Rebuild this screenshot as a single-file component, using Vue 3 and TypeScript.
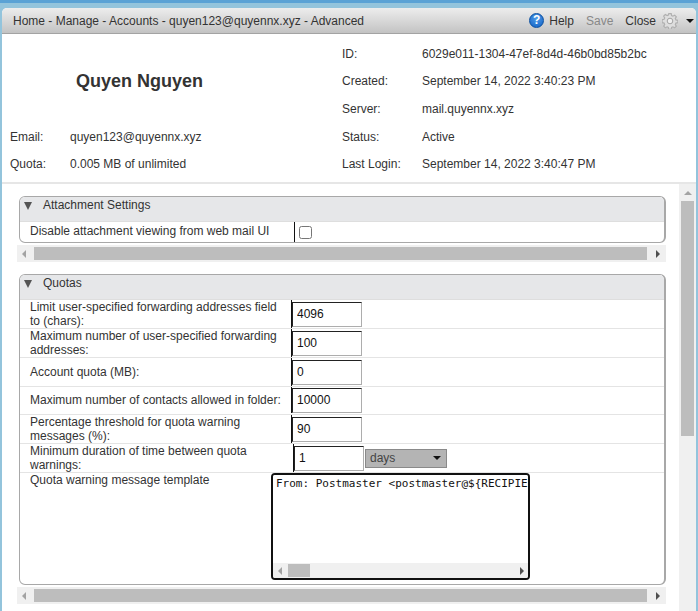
<template>
  <div class="page">
    <div class="window">
      <div class="toolbar">
        <span class="crumbs">Home - Manage - Accounts - quyen123@quyennx.xyz - Advanced</span>
        <div class="actions">
          <span class="help-icon">?</span>
          <span class="action help">Help</span>
          <span class="action save">Save</span>
          <span class="action close">Close</span>
          <svg class="gear" width="16" height="16" viewBox="0 0 16 16">
            <path
              d="M6.8.6h2.4l.4 2 1.3.6 1.8-1 1.6 1.6-1 1.8.6 1.3 2 .4v2.4l-2 .4-.6 1.3 1 1.8-1.6 1.6-1.8-1-1.3.6-.4 2H6.8l-.4-2-1.3-.6-1.8 1-1.6-1.6 1-1.8-.6-1.3-2-.4V6.700l2-.4.6-1.300-1-1.800 1.600-1.600 1.800 1 1.300-.6z"
              fill="#dedede"
              stroke="#b0b0b0"
              stroke-width="1.2"
            />
            <circle cx="8" cy="8" r="2.8" fill="#efefef" stroke="#a4a4a4" />
          </svg>
          <svg class="caret" width="8" height="4" viewBox="0 0 8 4">
            <path d="M0 0h8L4 4z" fill="#111" />
          </svg>
        </div>
      </div>

      <div class="summary">
        <div class="summary-left">
          <div class="name">Quyen Nguyen</div>
          <div v-for="row in leftInfo" :key="row.label" class="info-row left-row">
            <span class="info-label">{{ row.label }}</span>
            <span>{{ row.value }}</span>
          </div>
        </div>
        <div class="summary-right">
          <div v-for="row in rightInfo" :key="row.label" class="info-row right-row">
            <span class="info-label">{{ row.label }}</span>
            <span>{{ row.value }}</span>
          </div>
        </div>
      </div>

      <div class="scroller">
        <div class="content">
          <section class="panel">
            <div class="panel-head"><span class="twisty"></span>Attachment Settings</div>
            <div class="row check-row">
              <div class="label check-label">Disable attachment viewing from web mail UI</div>
              <div class="field"><input type="checkbox" class="check" /></div>
            </div>
          </section>
          <div class="hbar">
            <span class="arrow-left"></span>
            <span class="hthumb"></span>
            <span class="arrow-right"></span>
          </div>

          <section class="panel quotas">
            <div class="panel-head"><span class="twisty"></span>Quotas</div>
            <div
              v-for="row in quotaRows"
              :key="row.label"
              class="row"
              :style="{ height: row.height + 'px', paddingBottom: row.height === 28 ? '1px' : '0' }"
            >
              <div class="label" :style="{ width: row.labelWidth + 'px' }">{{ row.label }}</div>
              <div class="field">
                <input class="num" :value="row.value" />
                <div v-if="row.unit" class="select">{{ row.unit }}<span class="select-caret"></span></div>
              </div>
            </div>
            <div class="row template-row">
              <div class="template-label">Quota warning message template</div>
              <div class="template-box">
                <textarea class="template-text" wrap="off" readonly>From: Postmaster &lt;postmaster@${RECIPIENT_DOMAIN}&gt;</textarea>
                <div class="inner-bar">
                  <span class="arrow-left small"></span>
                  <span class="inner-thumb"></span>
                  <span class="arrow-right small"></span>
                </div>
              </div>
            </div>
          </section>
          <div class="hbar">
            <span class="arrow-left"></span>
            <span class="hthumb"></span>
            <span class="arrow-right"></span>
          </div>
        </div>

        <div class="vbar">
          <span class="arrow-up"></span>
          <span class="vthumb"></span>
        </div>
      </div>
    </div>
  </div>
</template>

<script setup lang="ts">
const leftInfo = [
  { label: 'Email:', value: 'quyen123@quyennx.xyz' },
  { label: 'Quota:', value: '0.005 MB of unlimited' },
];

const rightInfo = [
  { label: 'ID:', value: '6029e011-1304-47ef-8d4d-46b0bd85b2bc' },
  { label: 'Created:', value: 'September 14, 2022 3:40:23 PM' },
  { label: 'Server:', value: 'mail.quyennx.xyz' },
  { label: 'Status:', value: 'Active' },
  { label: 'Last Login:', value: 'September 14, 2022 3:40:47 PM' },
];

const quotaRows = [
  { label: 'Limit user-specified forwarding addresses field to (chars):', value: '4096', labelWidth: 271, height: 29 },
  { label: 'Maximum number of user-specified forwarding addresses:', value: '100', labelWidth: 271, height: 29 },
  { label: 'Account quota (MB):', value: '0', labelWidth: 271, height: 29 },
  { label: 'Maximum number of contacts allowed in folder:', value: '10000', labelWidth: 271, height: 28 },
  { label: 'Percentage threshold for quota warning messages (%):', value: '90', labelWidth: 271, height: 29 },
  { label: 'Minimum duration of time between quota warnings:', value: '1', labelWidth: 273, height: 29, unit: 'days' },
];
</script>

<style>
html,
body {
  margin: 0;
  overflow: hidden;
}
</style>

<style scoped>
.page {
  width: 698px;
  height: 611px;
  box-sizing: border-box;
  padding: 8px 2px 0;
  background: linear-gradient(#5aa2d5 0, #5aa2d5 3px, #93c4dc 3px);
  font-family: 'Liberation Sans', Arial, sans-serif;
  font-size: 12px;
  color: #333;
  overflow: hidden;
}

.window {
  height: 603px;
  display: flex;
  flex-direction: column;
  background: #fff;
  border-radius: 5px 5px 0 0;
  overflow: hidden;
}

.toolbar {
  height: 26px;
  flex: none;
  box-sizing: border-box;
  display: flex;
  align-items: center;
  justify-content: space-between;
  padding: 0 2px 0 11px;
  background: linear-gradient(#ededed, #c3c3c3);
  border-bottom: 1px solid #a3a3a3;
  color: #333;
}

.actions {
  display: flex;
  align-items: center;
}

.help-icon {
  width: 13px;
  height: 13px;
  border-radius: 50%;
  border: 1px solid #0a4fa0;
  background: radial-gradient(circle at 50% 35%, #4f9be8, #1160c4);
  color: #fff;
  font-weight: bold;
  font-size: 12px;
  line-height: 13px;
  text-align: center;
}

.action.help {
  margin-left: 5px;
}

.action.save {
  margin-left: 12px;
  color: #888;
}

.action.close {
  margin-left: 12px;
}

.gear {
  flex: none;
  margin-left: 6px;
}

.caret {
  flex: none;
  margin-left: 8px;
}

.summary {
  height: 150px;
  flex: none;
  box-sizing: border-box;
  display: flex;
  padding-top: 6px;
  border-bottom: 2px solid #e6e6e6;
}

.summary-left {
  width: 340px;
  flex: none;
  box-sizing: border-box;
  padding-left: 8px;
}

.name {
  height: 82px;
  margin-bottom: 1px;
  padding-right: 73px;
  display: flex;
  align-items: center;
  justify-content: center;
  font-size: 18px;
  font-weight: bold;
}

.summary-right {
  display: grid;
  grid-template-rows: 27px 28px 28px 27px 27px;
}

.info-row {
  display: flex;
  align-items: center;
}

.left-row {
  height: 27px;
}

.left-row .info-label {
  width: 60px;
}

.right-row .info-label {
  width: 80px;
}

.scroller {
  flex: 1;
  min-height: 0;
  display: flex;
}

.content {
  width: 677px;
  flex: none;
  box-sizing: border-box;
  padding: 12px 13px 0 15px;
  overflow: hidden;
}

.panel {
  border: 1px solid #a8a8a8;
  border-width: 1px 2px 1px 1px;
  border-radius: 6px;
  overflow: hidden;
  margin-left: 2px;
}

.panel-head {
  height: 25px;
  display: flex;
  align-items: center;
  padding-bottom: 9px;
  box-sizing: border-box;
  background: #e6e7e9;
  border-bottom: 1px solid #dedede;
  color: #333;
}

.twisty {
  width: 0;
  margin: 2px 11px 0 4px;
  border-left: 4.5px solid transparent;
  border-right: 4.5px solid transparent;
  border-top: 8px solid #555;
}

.row {
  display: flex;
  box-sizing: border-box;
  border-bottom: 1px solid #e4e4e4;
}

.check-row {
  height: 20px;
  border-bottom: 0;
}

.label {
  flex: none;
  box-sizing: border-box;
  display: flex;
  align-items: center;
  padding: 0 8px 0 10px;
  line-height: 14px;
}

.check-label {
  width: 274px;
  padding-bottom: 2px;
}

.field {
  flex: 1;
  display: flex;
  align-items: center;
  border-left: 1px solid #111;
}

.check {
  width: 13px;
  height: 13px;
  margin: 0 0 0 4px;
}

.num {
  width: 70px;
  height: 25px;
  box-sizing: border-box;
  margin-left: 0;
  padding: 0 4px;
  border: 1px solid #adadad;
  border-top-color: #222;
  border-left: 1px solid #222;
  font: 12px 'Liberation Sans', Arial, sans-serif;
  color: #111;
  outline: none;
}

.select {
  width: 82px;
  height: 19px;
  box-sizing: border-box;
  margin-left: 1px;
  padding-left: 4px;
  display: flex;
  align-items: center;
  justify-content: space-between;
  background: #b4b4b4;
  border: 1px solid #8a8a8a;
  color: #444;
}

.select-caret {
  margin-right: 5px;
  border-left: 4px solid transparent;
  border-right: 4px solid transparent;
  border-top: 4px solid #111;
}

.template-row {
  height: 111px;
  border-bottom: 0;
  position: relative;
}

.template-label {
  padding: 0 0 0 10px;
}

.template-box {
  position: absolute;
  left: 251px;
  top: 0;
  width: 259px;
  height: 107px;
  box-sizing: border-box;
  border: 2px solid #111;
  border-radius: 4px;
  display: flex;
  flex-direction: column;
  justify-content: space-between;
  overflow: hidden;
  background: #fff;
}

.template-text {
  flex: 1;
  min-height: 0;
  margin: 0;
  padding: 2px 0 0 3px;
  border: 0;
  outline: none;
  resize: none;
  overflow: hidden;
  font: 11px 'DejaVu Sans Mono', monospace;
  white-space: pre;
  color: #111;
}

.inner-bar {
  height: 15px;
  flex: none;
  display: flex;
  align-items: center;
  background: #f0f0f0;
  padding: 0 4px;
}

.inner-thumb {
  width: 22px;
  height: 13px;
  margin-left: 6px;
  background: #bdbdbd;
}

.hbar {
  height: 17px;
  margin: 2px 0 12px;
  display: flex;
  align-items: center;
  padding: 0 6px 0 5px;
  background: #f0f0f0;
}

.hthumb {
  flex: 1;
  height: 13px;
  margin: 0 9px 0 8px;
  background: #bdbdbd;
}

.arrow-left {
  border-top: 4px solid transparent;
  border-bottom: 4px solid transparent;
  border-right: 4px solid #a3a3a3;
}

.arrow-right {
  border-top: 4px solid transparent;
  border-bottom: 4px solid transparent;
  border-left: 4px solid #505050;
}

.arrow-left.small {
  margin-left: 1px;
}

.arrow-right.small {
  margin-left: auto;
}

.vbar {
  width: 17px;
  flex: none;
  display: flex;
  flex-direction: column;
  align-items: center;
  background: #f0f0f0;
}

.arrow-up {
  margin-top: 7px;
  border-left: 4px solid transparent;
  border-right: 4px solid transparent;
  border-bottom: 4px solid #a3a3a3;
}

.vthumb {
  width: 13px;
  height: 235px;
  margin-top: 6px;
  background: #bdbdbd;
}
</style>
